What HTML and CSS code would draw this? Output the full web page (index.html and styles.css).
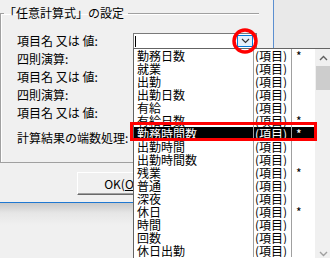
FILE: index.html
```html
<!DOCTYPE html>
<html lang="ja">
<head>
	<meta charset="UTF-8">
	<title>任意計算式の設定</title>
	<link rel="stylesheet" href="styles.css">
</head>
<body>
	<div class="screen">
		<div class="top">
			<div class="dialog">
				<fieldset class="group">
					<legend>「任意計算式」の設定</legend>
					<div class="fields">
						<span class="label">項目名 又は 値:</span>
						<div class="combo">
							<span class="caret"></span>
							<span class="drop-btn">
								<svg width="9" height="6" viewBox="0 0 9 6"><path d="M1 1l3.5 3.5L8 1" fill="none" stroke="#333" stroke-width="1.2"/></svg>
							</span>
						</div>
						<span class="label">四則演算:</span><span></span>
						<span class="label">項目名 又は 値:</span><span></span>
						<span class="label">四則演算:</span><span></span>
						<span class="label">項目名 又は 値:</span><span></span>
						<span class="label last">計算結果の端数処理:</span><span></span>
					</div>
				</fieldset>
				<div class="actions">
					<button class="btn">OK(<u>O</u>)</button>
				</div>
			</div>
			<div class="side"></div>
		</div>
		<div class="shadow"></div>

		<div class="dropdown">
			<ul class="list" id="list"></ul>
			<div class="scrollbar">
				<span class="arrow">
					<svg width="9" height="6" viewBox="0 0 9 6"><path d="M1 5l3.5-3.5L8 5" fill="none" stroke="#606060" stroke-width="1.4"/></svg>
				</span>
				<span class="thumb"></span>
				<span class="track"></span>
				<span class="arrow">
					<svg width="9" height="6" viewBox="0 0 9 6"><path d="M1 1l3.5 3.5L8 1" fill="none" stroke="#a0a0a0" stroke-width="1.4"/></svg>
				</span>
			</div>
		</div>

		<svg class="mark-circle" width="30" height="30" viewBox="0 0 30 30"><circle cx="15" cy="15" r="11" fill="none" stroke="#f00" stroke-width="3.5"/></svg>
		<div class="mark-box"></div>
	</div>
	<script>
		const items = [
			['勤務日数', '*'], ['就業', ''], ['出勤', ''], ['出勤日数', ''],
			['有給', ''], ['有給日数', '*'], ['勤務時間数', '*'], ['出勤時間', ''],
			['出勤時間数', ''], ['残業', '*'], ['普通', ''], ['深夜', ''],
			['休日', '*'], ['時間', ''], ['回数', ''], ['休日出勤', '']
		];
		let _DOM = ``;
		items.map((item, i) => {
			_DOM += `
			<li class="${i === 6 ? 'row selected' : 'row'}">
				<span class="name">${item[0]}</span>
				<span class="kind">(項目)</span>
				<span class="flag">${item[1]}</span>
			</li>`;
		});
		document.getElementById('list').innerHTML = _DOM;
	</script>
</body>
</html>
```

FILE: styles.css
```css
html,
body {
	margin: 0;
	width: 330px;
	height: 258px;
	overflow: hidden;
}

body {
	background: #f0f0f0;
	font-family: "Noto Sans CJK JP", "Noto Sans", sans-serif;
	font-size: 12px;
	color: #000;
}

.screen {
	position: relative;
	height: 100%;
}

.top {
	display: flex;
	height: 203px;
}

.dialog {
	width: 274px;
	box-sizing: border-box;
	border-right: 1px solid #5b8fd0;
	border-bottom: 1px solid #1f78d1;
	background: #f0f0f0;
}

.side {
	flex: 1;
	background: #e9e9e9;
}

.shadow {
	height: 55px;
	background: linear-gradient(#c9c9c9, #e6e6e6 10px, #f0f0f0 22px);
}

.group {
	margin: 6px 0 0 0;
	padding: 0 0 0 3px;
	width: 259px;
	height: 157px;
	box-sizing: border-box;
	border: 1px solid #a0a0a0;
	border-width: 1px 0 1px 1px;
	box-shadow: inset 1px 1px #fff;
}

.group legend {
	padding: 0 4px 0 0;
	line-height: 14px;
}

.fields {
	display: grid;
	grid-template-columns: 116px 124px;
	grid-auto-rows: 18px;
	margin: 12px 0 0 13px;
	align-items: center;
}

.label {
	line-height: 16px;
	white-space: nowrap;
}

.label.last {
	margin-top: 14px;
}

.combo {
	height: 16px;
	box-sizing: border-box;
	border: 1px solid #7a7a7a;
	background: #fff;
	display: flex;
	align-items: center;
	justify-content: space-between;
	padding: 0 3px 0 1px;
}

.caret {
	width: 1px;
	height: 11px;
	background: #000;
}

.drop-btn {
	width: 16px;
	height: 12px;
	box-sizing: border-box;
	border: 1px solid #0078d7;
	background: #e5f1fb;
	display: flex;
	align-items: center;
	justify-content: center;
}

.actions {
	padding: 9px 0 0 77px;
}

.btn {
	width: 88px;
	height: 23px;
	padding: 0;
	font: inherit;
	background: #f0f0f0;
	border: 1px solid;
	border-color: #fff #696969 #696969 #fff;
	box-shadow: inset -1px -1px #a0a0a0;
	text-align: center;
}

/* dropdown list */
.dropdown {
	position: absolute;
	left: 133px;
	top: 48px;
	width: 200px;
	height: 215px;
	box-sizing: border-box;
	border: 1px solid #646464;
	background: #fff;
	display: flex;
}

.list {
	list-style: none;
	margin: 0;
	padding: 0;
	flex: 1;
}

.row {
	display: grid;
	grid-template-columns: 120px 38px 1fr;
	height: 13px;
	line-height: 13px;
	white-space: nowrap;
}

.row span {
	border-right: 1px solid #a0a0a0;
	overflow: hidden;
}

.row .name {
	padding-left: 3px;
}

.row .kind {
	padding-left: 1px;
}

.row .flag {
	border-right: 0;
	padding-left: 4px;
}

.selected {
	background: #000;
	color: #fff;
}

.scrollbar {
	width: 17px;
	background: #f0f0f0;
	display: flex;
	flex-direction: column;
}

.arrow {
	height: 17px;
	display: flex;
	align-items: center;
	justify-content: center;
}

.thumb {
	height: 24px;
	margin: 0 1px;
	background: #cdcdcd;
}

.track {
	flex: 1;
}

/* annotations */
.mark-circle {
	position: absolute;
	left: 230px;
	top: 26px;
}

.mark-box {
	position: absolute;
	left: 130px;
	top: 122px;
	width: 187px;
	height: 19px;
	box-sizing: border-box;
	border: 3px solid #f00;
}
```
